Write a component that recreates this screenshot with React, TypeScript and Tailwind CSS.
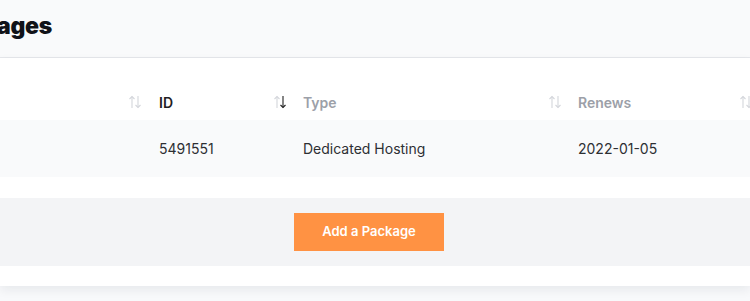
const SortIcon = ({ active }: { active?: "up" | "down" }) => (
  <svg width="14" height="16" viewBox="0 0 14 16" fill="none" className="shrink-0">
    <g stroke={active === "up" ? "#222" : "#d4d6db"} strokeWidth="1.1">
      <path d="M4 14V2.5" />
      <path d="M1.5 5L4 2.5L6.5 5" />
    </g>
    <g stroke={active === "down" ? "#222" : "#d4d6db"} strokeWidth="1.1">
      <path d="M10 2V13.5" />
      <path d="M7.5 11L10 13.5L12.5 11" />
    </g>
  </svg>
);

const cols = "grid grid-cols-[144px_145px_275px_191px]";

export default function App() {
  return (
    <div className="min-h-screen bg-[#f8f9fb] font-['Inter',sans-serif] overflow-hidden">
      <div className="h-[58px] bg-[#f9fafb] border-b border-[#e5e7eb] flex items-center">
        <div className="w-[52px] flex justify-end whitespace-nowrap">
          <h1 className="text-[23px] font-black text-[#111318] tracking-[-0.3px] leading-none pb-[4px]">
            Packages
          </h1>
        </div>
      </div>

      <div className="bg-white pt-[26px] pb-[20px] shadow-[0_4px_10px_rgba(17,24,39,0.07)]">
        <div className={`${cols} h-[36px] text-[14px] font-semibold`}>
          <div className="flex items-center justify-end pr-[2px]">
            <SortIcon />
          </div>
          <div className="flex items-center justify-between pl-[15px] pr-[2px] text-[#1f2023]">
            <span>ID</span>
            <SortIcon active="down" />
          </div>
          <div className="flex items-center justify-between pl-[14px] pr-[2px] text-[#9ca0a8]">
            <span>Type</span>
            <SortIcon />
          </div>
          <div className="flex items-center justify-between pl-[14px] pr-[2px] text-[#9ca0a8]">
            <span>Renews</span>
            <SortIcon />
          </div>
        </div>

        <div className={`${cols} h-[57px] bg-[#f9fafb] text-[14px] text-[#2d2f33]`}>
          <div />
          <div className="flex items-center pl-[15px]">5491551</div>
          <div className="flex items-center pl-[14px]">Dedicated Hosting</div>
          <div className="flex items-center pl-[14px]">2022-01-05</div>
        </div>

        <div className="mt-[21px] h-[68px] bg-[#f3f4f6] flex items-center pl-[294px]">
          <button className="w-[150px] h-[38px] bg-[#ff9243] text-white text-[13px] font-semibold">
            Add a Package
          </button>
        </div>
      </div>
    </div>
  );
}
